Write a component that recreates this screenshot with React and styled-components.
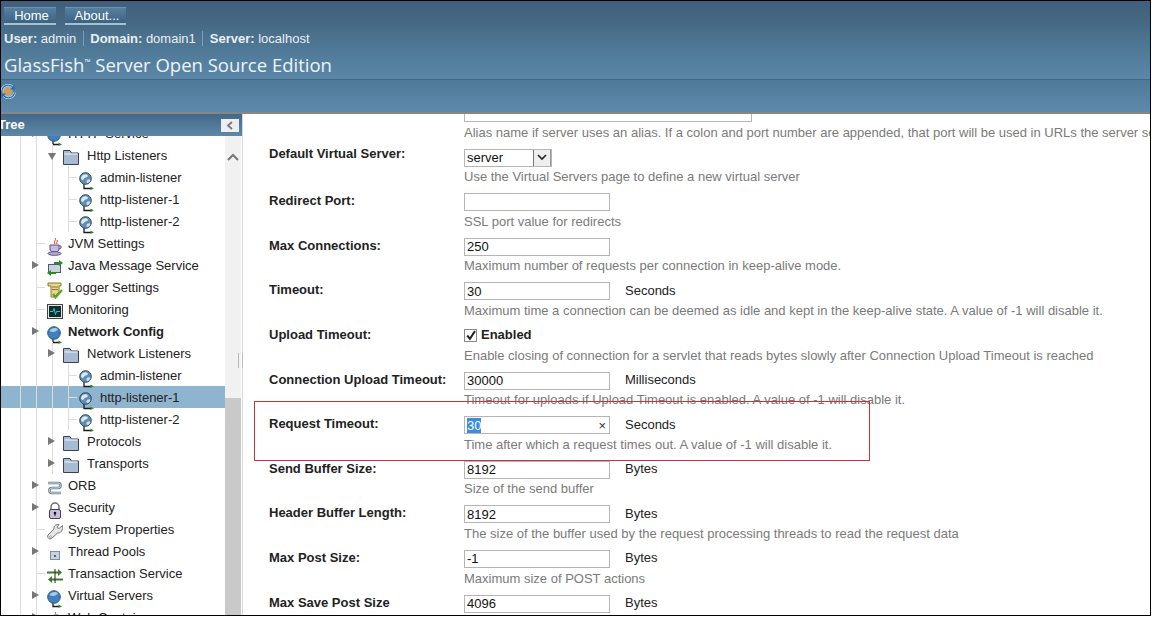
import React from 'react';
import styled, { createGlobalStyle } from 'styled-components';

const GlobalStyle = createGlobalStyle`
  html, body {
    margin: 0;
    padding: 0;
    background: #fff;
  }
  body {
    font-family: "Liberation Sans", Arial, sans-serif;
    font-size: 13px;
    color: #222;
  }
`;

/* ---------- icons ---------- */

const ListenerIcon = () => (
  <svg width="16" height="18" viewBox="0 0 16 18">
    <path d="M5 12v4.500h7" fill="none" stroke="#1b1b1b" strokeWidth="1.300" />
    <circle cx="6.500" cy="6.500" r="5.800" fill="#5f90b4" stroke="#2c4664" />
    <path d="M2.500 4.500C4 2 7 1.500 8.500 3c1 1-.5 2.500-2 2.500S5 8 3.500 8 1.800 5.500 2.500 4.500z" fill="#dfe9ef" />
    <path d="M8 8c1.500-1 3-1 3.500 0-.5 2-2 3-3 3S7 9 8 8z" fill="#cfdde8" />
    <path d="M11.500 14.500l3.500 2-3.500 1.500z" fill="#2c8a2c" />
  </svg>
);

const NetworkIcon = () => (
  <svg width="16" height="18" viewBox="0 0 16 18">
    <path d="M6 13v3.500h6" fill="none" stroke="#1b1b1b" strokeWidth="1.300" />
    <circle cx="7" cy="7" r="6.300" fill="#3f80bf" stroke="#2a5684" />
    <path d="M2.500 5C4 2 8 1 11 3c-1 2.500-5 4-8.500 2z" fill="#a8cbe6" />
    <path d="M11.500 14.500l3.500 2-3.500 1.500z" fill="#2c8a2c" />
  </svg>
);

const FolderIcon = () => (
  <svg width="16" height="16" viewBox="0 0 16 16">
    <path d="M.5 15.500V1.500h6.500l1.500 2.500h7v11.500z" fill="#a7bbd2" stroke="#39424e" />
    <path d="M1.500 5h13" stroke="#e6edf4" strokeWidth="1.200" />
  </svg>
);

const JavaIcon = () => (
  <svg width="16" height="18" viewBox="0 0 16 18">
    <path d="M8 0c2 2-2 3 0 6M10 2c1 2-1 2 0 4" fill="none" stroke="#d33a2c" />
    <path d="M3 7h9v4c0 2-2 3-4.500 3S3 13 3 11z" fill="#c6bce0" stroke="#5b5080" />
    <path d="M12 8h2v2l-2 1" fill="none" stroke="#5b5080" />
    <ellipse cx="7.500" cy="15.500" rx="6.500" ry="1.800" fill="#b6aed4" stroke="#5b5080" />
  </svg>
);

const MessageIcon = () => (
  <svg width="16" height="16" viewBox="0 0 16 16">
    <rect x="1.500" y="4.500" width="12" height="8" fill="#c7d2dc" stroke="#4e5b68" />
    <path d="M7 3h6" stroke="#2c8a2c" strokeWidth="2" />
    <path d="M12 0l4 3-4 3z" fill="#2c8a2c" />
    <path d="M3 13h6" stroke="#2c8a2c" strokeWidth="2" />
    <path d="M4 10l-4 3 4 3z" fill="#2c8a2c" />
  </svg>
);

const LoggerIcon = () => (
  <svg width="16" height="17" viewBox="0 0 16 17">
    <path d="M1 1h13v3h-2v6l-5 5H4V4H1z" fill="#e8d689" stroke="#8b7a33" />
    <path d="M5 5h6M5 7.500h6" stroke="#8b7a33" />
    <path d="M6 12l2.500 3.500L15 8" fill="none" stroke="#5aa52e" strokeWidth="2.200" />
  </svg>
);

const MonitorIcon = () => (
  <svg width="16" height="15" viewBox="0 0 16 15">
    <rect x=".5" y=".5" width="15" height="14" fill="#e6e6e6" stroke="#444" />
    <rect x="2" y="2" width="12" height="11" fill="#0b2f33" />
    <path d="M3 7.500h3l1-3 1.500 6 1-3H13" fill="none" stroke="#35c9b4" />
  </svg>
);

const OrbIcon = () => (
  <svg width="16" height="16" viewBox="0 0 16 16" fill="none">
    <path d="M1 3h10c3.500 0 3.500 5 0 5H5c-3.500 0-3.500 5 0 5h9" stroke="#5d7388" strokeWidth="2.400" />
    <path d="M1 3h10c3.500 0 3.500 5 0 5H5c-3.500 0-3.500 5 0 5h9" stroke="#dbe4ec" strokeWidth="1" />
  </svg>
);

const LockIcon = () => (
  <svg width="16" height="17" viewBox="0 0 16 17">
    <path d="M4 8V5a4 4 0 0 1 8 0v3" fill="none" stroke="#6d6d78" strokeWidth="1.500" />
    <rect x="2.500" y="7.500" width="11" height="9" rx="1.500" fill="#c8bede" stroke="#444" />
    <circle cx="8" cy="11" r="1.300" fill="#111" />
    <path d="M7.500 11h1v3h-1z" fill="#111" />
  </svg>
);

const WrenchIcon = () => (
  <svg width="16" height="17" viewBox="0 0 16 17">
    <path d="M15.500 1.500l-3.500 3-2-1 2-3c-3-.5-5.500 1.500-5 4.500L1 11c-1.500 2.500 1.500 5 3.500 3.500L10.500 9c3 .5 6-3 5-7.500z" fill="#e6e6e6" stroke="#757575" />
    <circle cx="3.500" cy="12.800" r="1" fill="#fff" stroke="#757575" strokeWidth=".6" />
  </svg>
);

const ThreadIcon = () => (
  <svg width="16" height="16" viewBox="0 0 16 16">
    <rect x="3.500" y="5.500" width="9" height="8" fill="#c6d3e0" stroke="#7d8fa1" />
    <rect x="7" y="9" width="2" height="2" fill="#50627a" />
  </svg>
);

const TransactionIcon = () => (
  <svg width="16" height="16" viewBox="0 0 16 16">
    <path d="M0 4.500h11M5 11.500h11" stroke="#3d7d2a" strokeWidth="2" />
    <path d="M11 1l4 3.500L11 8zM5 8l-4 3.500L5 15z" fill="#3d7d2a" />
    <path d="M8 1v14" stroke="#222" />
  </svg>
);

const RefreshIcon = () => (
  <svg width="15" height="15" viewBox="0 0 15 15">
    <circle cx="6.500" cy="7.500" r="5.200" fill="#c99f68" />
    <path d="M1 6.500A6.200 6.200 0 0 1 12 3.500" fill="none" stroke="#dff0fb" strokeWidth="2.400" />
    <path d="M13.500 8.500A6.200 6.200 0 0 1 2.500 11.500" fill="none" stroke="#dff0fb" strokeWidth="2.400" />
    <path d="M1 6.500A6.200 6.200 0 0 1 12 3.500" fill="none" stroke="#1670c4" strokeWidth="1.400" />
    <path d="M13.500 8.500A6.200 6.200 0 0 1 2.500 11.500" fill="none" stroke="#1670c4" strokeWidth="1.400" />
    <path d="M13.500 1v4.500H9zM.5 14V9.500H5z" fill="#1670c4" />
  </svg>
);

const icons = {
  listener: ListenerIcon,
  network: NetworkIcon,
  folder: FolderIcon,
  java: JavaIcon,
  message: MessageIcon,
  logger: LoggerIcon,
  monitor: MonitorIcon,
  orb: OrbIcon,
  lock: LockIcon,
  wrench: WrenchIcon,
  thread: ThreadIcon,
  transaction: TransactionIcon
};

/* ---------- data ---------- */

// cols: one letter per guide column. l = line, e = elbow, a = closed arrow, d = open arrow
const treeRows = [
  { cols: 'la', icon: 'network', label: 'HTTP Service' },
  { cols: 'lld', icon: 'folder', label: 'Http Listeners' },
  { cols: 'llle', icon: 'listener', label: 'admin-listener' },
  { cols: 'llle', icon: 'listener', label: 'http-listener-1' },
  { cols: 'llle', icon: 'listener', label: 'http-listener-2' },
  { cols: 'le', icon: 'java', label: 'JVM Settings' },
  { cols: 'la', icon: 'message', label: 'Java Message Service' },
  { cols: 'le', icon: 'logger', label: 'Logger Settings' },
  { cols: 'le', icon: 'monitor', label: 'Monitoring' },
  { cols: 'la', icon: 'network', label: 'Network Config', bold: true },
  { cols: 'lla', icon: 'folder', label: 'Network Listeners' },
  { cols: 'llle', icon: 'listener', label: 'admin-listener' },
  { cols: 'llle', icon: 'listener', label: 'http-listener-1', selected: true },
  { cols: 'llle', icon: 'listener', label: 'http-listener-2' },
  { cols: 'lla', icon: 'folder', label: 'Protocols' },
  { cols: 'lla', icon: 'folder', label: 'Transports' },
  { cols: 'la', icon: 'orb', label: 'ORB' },
  { cols: 'la', icon: 'lock', label: 'Security' },
  { cols: 'le', icon: 'wrench', label: 'System Properties' },
  { cols: 'la', icon: 'thread', label: 'Thread Pools' },
  { cols: 'le', icon: 'transaction', label: 'Transaction Service' },
  { cols: 'la', icon: 'network', label: 'Virtual Servers' },
  { cols: 'la', icon: 'java', label: 'Web Container' }
];

const formRows = [
  {
    label: 'Default Virtual Server:',
    select: 'server',
    hint: 'Use the Virtual Servers page to define a new virtual server'
  },
  { label: 'Redirect Port:', value: '', hint: 'SSL port value for redirects' },
  {
    label: 'Max Connections:',
    value: '250',
    hint: 'Maximum number of requests per connection in keep-alive mode.'
  },
  {
    label: 'Timeout:',
    value: '30',
    unit: 'Seconds',
    hint: 'Maximum time a connection can be deemed as idle and kept in the keep-alive state. A value of -1 will disable it.'
  },
  {
    label: 'Upload Timeout:',
    check: 'Enabled',
    hint: 'Enable closing of connection for a servlet that reads bytes slowly after Connection Upload Timeout is reached'
  },
  {
    label: 'Connection Upload Timeout:',
    value: '30000',
    unit: 'Milliseconds',
    hint: 'Timeout for uploads if Upload Timeout is enabled. A value of -1 will disable it.'
  },
  {
    label: 'Request Timeout:',
    value: '30',
    selected: true,
    unit: 'Seconds',
    hint: 'Time after which a request times out. A value of -1 will disable it.'
  },
  { label: 'Send Buffer Size:', value: '8192', unit: 'Bytes', hint: 'Size of the send buffer' },
  {
    label: 'Header Buffer Length:',
    value: '8192',
    unit: 'Bytes',
    hint: 'The size of the buffer used by the request processing threads to read the request data'
  },
  { label: 'Max Post Size:', value: '-1', unit: 'Bytes', hint: 'Maximum size of POST actions' },
  { label: 'Max Save Post Size', value: '4096', unit: 'Bytes', hint: '' }
];

/* ---------- frame and header ---------- */

const Frame = styled.div`
  width: 1151px;
  height: 616px;
  box-sizing: border-box;
  border: 1px solid #000;
  display: flex;
  flex-direction: column;
  overflow: hidden;
`;

const Masthead = styled.header`
  height: 79px;
  flex: none;
  box-sizing: border-box;
  padding: 6px 0 0 3px;
  border-bottom: 1px solid #3f6a85;
  background: linear-gradient(#3f5f7d, #44667f 20%, #4f7896 60%, #5c87a8);
  color: #fff;
`;

const NavButtons = styled.div`
  display: flex;
  gap: 9px;
`;

const NavButton = styled.button`
  height: 18px;
  width: ${props => props.$width}px;
  padding: 0 0 0 3px;
  border: 0;
  border-top: 1px solid #6f93ad;
  border-bottom: 2px solid #a9c0d0;
  background: linear-gradient(#577f9f, #3b6384);
  color: #fff;
  font: 13px "Liberation Sans", Arial, sans-serif;
`;

const UserBar = styled.div`
  display: flex;
  align-items: center;
  margin-top: 6px;
  height: 14px;
  color: #e9f0f5;
`;

const UserItem = styled.span`
  padding-right: 6.500px;
  margin-right: 6.500px;
  border-right: 1px solid #7d9db5;
  &:last-child {
    border-right: 0;
  }
  b {
    font-weight: bold;
  }
`;

const Title = styled.div`
  margin-top: 8px;
  font-family: "Open Sans", sans-serif;
  font-size: 18.500px;
  line-height: 24px;
  color: #eef4f8;
  sup {
    font-size: 8px;
    line-height: 0;
    vertical-align: 7px;
  }
`;

const Toolbar = styled.div`
  height: 32px;
  flex: none;
  padding-top: 4px;
  box-sizing: border-box;
  background: linear-gradient(#4f7999, #5f89aa);
`;

const Content = styled.div`
  flex: 1;
  min-height: 0;
  display: flex;
  border-top: 2px solid #868686;
`;

/* ---------- tree ---------- */

const TreePanel = styled.aside`
  width: 241px;
  flex: none;
  display: flex;
  flex-direction: column;
  border-right: 1px solid #d8d8d8;
  position: relative;
`;

const TreeHeader = styled.div`
  height: 22px;
  flex: none;
  box-sizing: border-box;
  padding: 0 3px 2px 0;
  display: flex;
  align-items: center;
  justify-content: space-between;
  background: linear-gradient(#446889, #5c88a8);
  color: #fff;
  font-weight: bold;
  text-indent: -3px;
`;

const CollapseButton = styled.span`
  width: 18px;
  height: 13px;
  margin-top: 2px;
  background: #eee;
  display: flex;
  align-items: center;
  justify-content: center;
`;

const TreeBody = styled.div`
  flex: 1;
  min-height: 0;
  display: flex;
  overflow: hidden;
`;

const TreeList = styled.div`
  width: 224px;
  flex: none;
  margin-top: -14px;
`;

const TreeRow = styled.div`
  height: 22px;
  display: flex;
  align-items: center;
  padding-left: 11px;
  background: ${props => (props.$selected ? '#8fb4cf' : 'transparent')};
  font-weight: ${props => (props.$bold ? 'bold' : 'normal')};
  white-space: nowrap;
`;

const GuideCol = styled.span`
  width: 16px;
  height: 22px;
  flex: none;
  position: relative;
  &::before {
    content: '';
    position: absolute;
    left: 8px;
    top: 0;
    width: 1px;
    height: 100%;
    background: #dcdcdc;
  }
  &::after {
    content: '';
    position: absolute;
    left: 8px;
    top: 11px;
    height: 1px;
    width: ${props => (props.$kind === 'e' ? '9px' : 0)};
    background: #dcdcdc;
  }
`;

const Arrow = styled.span`
  position: absolute;
  z-index: 1;
  left: 4px;
  top: ${props => (props.$open ? '9px' : '7px')};
  width: 0;
  height: 0;
  ${props =>
    props.$open
      ? `border-left: 4px solid transparent;
         border-right: 4px solid transparent;
         border-top: 7px solid #777;`
      : `border-top: 4px solid transparent;
         border-bottom: 4px solid transparent;
         border-left: 7px solid #777;`}
`;

const TreeIcon = styled.span`
  width: 16px;
  flex: none;
  align-self: flex-start;
  margin: ${props => (props.$folder ? 5 : 6)}px ${props => (props.$folder ? 8 : 5)}px 0 3px;
  display: flex;
`;

const TreeLabel = styled.span`
  color: #222;
`;

const ScrollTrack = styled.div`
  width: 16px;
  flex: none;
  display: flex;
  flex-direction: column;
  background: #f1f1f1;
`;

const ScrollUp = styled.div`
  height: 262px;
  flex: none;
  display: flex;
  justify-content: center;
  padding-top: 17px;
  box-sizing: border-box;
`;

const ScrollThumb = styled.div`
  flex: 1;
  background: #c9c9c9;
`;

const Grip = styled.span`
  position: absolute;
  right: -1px;
  top: 239px;
  width: 3px;
  height: 15px;
  border-left: 1px solid #bbb;
  border-right: 1px solid #bbb;
`;

/* ---------- form ---------- */

const Main = styled.main`
  flex: 1;
  min-width: 0;
  position: relative;
  overflow: hidden;
`;

const Form = styled.div`
  margin-top: -10px;
`;

const FormRow = styled.div`
  height: 44.600px;
  display: flex;
  padding-left: 26px;
  white-space: nowrap;
`;

const FieldLabel = styled.div`
  width: 195px;
  flex: none;
  margin-top: ${props => (props.$raised ? -3 : 0)}px;
  font-weight: bold;
  color: #222;
  line-height: 15px;
`;

const FieldBody = styled.div`
  flex: 1;
  min-width: 0;
`;

const FieldLine = styled.div`
  display: flex;
  align-items: center;
  height: 18px;
`;

const Hint = styled.div`
  margin-top: 2.600px;
  line-height: 15px;
  color: #7a7a7a;
`;

const TextBox = styled.div`
  width: ${props => props.$width || 146}px;
  height: 18px;
  box-sizing: border-box;
  flex: none;
  display: flex;
  align-items: center;
  justify-content: space-between;
  padding: 0 3px 0 2px;
  border: 1px solid #b5b5b5;
  background: #fff;
  color: #111;
`;

const SelectedText = styled.span`
  background: #3c8dde;
  color: #fff;
`;

const ClearMark = styled.span`
  font-size: 13px;
  line-height: 1;
  color: #333;
`;

const Unit = styled.span`
  margin: 0 0 2px 15px;
  color: #222;
`;

const SelectBox = styled.div`
  width: 88px;
  height: 18px;
  box-sizing: border-box;
  display: flex;
  align-items: center;
  justify-content: space-between;
  padding-left: 2px;
  border: 1px solid #b5b5b5;
  color: #111;
`;

const SelectArrow = styled.span`
  width: 18px;
  height: 100%;
  box-sizing: border-box;
  display: flex;
  align-items: center;
  justify-content: center;
  border-left: 1px solid #777;
  border-right: 1px solid #999;
  background: #eee;
`;

const CheckMark = styled.span`
  width: 13px;
  height: 13px;
  box-sizing: border-box;
  border: 1px solid #888;
  margin-right: 4px;
  display: flex;
  align-items: center;
  justify-content: center;
`;

const CheckLabel = styled.span`
  font-weight: bold;
  color: #222;
  margin-bottom: 2px;
`;

const Highlight = styled.div`
  position: absolute;
  left: 11px;
  top: 287px;
  width: 616px;
  height: 60px;
  box-sizing: border-box;
  border: 1px solid #c8323a;
  pointer-events: none;
`;

const TextBoxField = ({ row }) => (
  <TextBox>
    {row.selected ? <SelectedText>{row.value}</SelectedText> : <span>{row.value}</span>}
    {row.selected && <ClearMark>×</ClearMark>}
  </TextBox>
);

const FieldControl = ({ row }) => {
  if (row.select) {
    return (
      <SelectBox>
        <span>{row.select}</span>
        <SelectArrow>
          <svg width="10" height="7" viewBox="0 0 10 7">
            <path d="M1 1l4 4 4-4" fill="none" stroke="#222" strokeWidth="1.600" />
          </svg>
        </SelectArrow>
      </SelectBox>
    );
  }
  if (row.check) {
    return (
      <>
        <CheckMark>
          <svg width="11" height="11" viewBox="0 0 10 10">
            <path d="M2 5l2.500 3L9 1" fill="none" stroke="#222" strokeWidth="1.800" />
          </svg>
        </CheckMark>
        <CheckLabel>{row.check}</CheckLabel>
      </>
    );
  }
  return (
    <>
      <TextBoxField row={row} />
      {row.unit && <Unit>{row.unit}</Unit>}
    </>
  );
};

const App = () => (
  <>
    <GlobalStyle />
    <Frame>
      <Masthead>
        <NavButtons>
          <NavButton $width={52}>Home</NavButton>
          <NavButton $width={61}>About...</NavButton>
        </NavButtons>
        <UserBar>
          <UserItem>
            <b>User:</b> admin
          </UserItem>
          <UserItem>
            <b>Domain:</b> domain1
          </UserItem>
          <UserItem>
            <b>Server:</b> localhost
          </UserItem>
        </UserBar>
        <Title>
          GlassFish<sup>™</sup> Server Open Source Edition
        </Title>
      </Masthead>
      <Toolbar>
        <RefreshIcon />
      </Toolbar>
      <Content>
        <TreePanel>
          <TreeHeader>
            <span>Tree</span>
            <CollapseButton>
              <svg width="8" height="9" viewBox="0 0 8 9">
                <path d="M6 1L2 4.500 6 8" fill="none" stroke="#777" strokeWidth="1.800" />
              </svg>
            </CollapseButton>
          </TreeHeader>
          <TreeBody>
            <TreeList>
              {treeRows.map((row, i) => {
                const Icon = icons[row.icon];
                return (
                  <TreeRow key={i} $bold={row.bold} $selected={row.selected}>
                    {row.cols.split('').map((kind, c) => (
                      <GuideCol key={c} $kind={kind}>
                        {(kind === 'a' || kind === 'd') && <Arrow $open={kind === 'd'} />}
                      </GuideCol>
                    ))}
                    <TreeIcon $folder={row.icon === 'folder'}>
                      <Icon />
                    </TreeIcon>
                    <TreeLabel>{row.label}</TreeLabel>
                  </TreeRow>
                );
              })}
            </TreeList>
            <ScrollTrack>
              <ScrollUp>
                <svg width="12" height="8" viewBox="0 0 12 8">
                  <path d="M1 7l5-5 5 5" fill="none" stroke="#777" strokeWidth="2" />
                </svg>
              </ScrollUp>
              <ScrollThumb />
            </ScrollTrack>
          </TreeBody>
          <Grip />
        </TreePanel>
        <Main>
          <Form>
            <FormRow>
              <FieldLabel />
              <FieldBody>
                <FieldLine>
                  <TextBox $width={288} />
                </FieldLine>
                <Hint>
                  Alias name if server uses an alias. If a colon and port number are appended, that port will be used in
                  URLs the server sends to the client.
                </Hint>
              </FieldBody>
            </FormRow>
            {formRows.map(row => (
              <FormRow key={row.label}>
                <FieldLabel $raised={Boolean(row.select)}>{row.label}</FieldLabel>
                <FieldBody>
                  <FieldLine>
                    <FieldControl row={row} />
                  </FieldLine>
                  <Hint>{row.hint}</Hint>
                </FieldBody>
              </FormRow>
            ))}
          </Form>
          <Highlight />
        </Main>
      </Content>
    </Frame>
  </>
);

export default App;
